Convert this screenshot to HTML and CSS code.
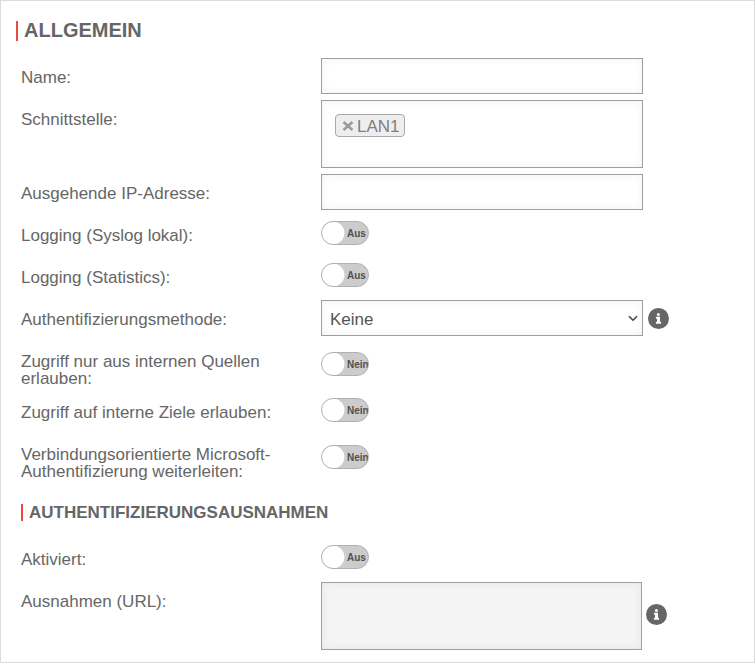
FILE: index.html
```html
<!DOCTYPE html>
<html lang="de">
<head>
<meta charset="utf-8">
<title>Allgemein</title>
<link rel="stylesheet" href="styles.css">
</head>
<body>
<svg class="symbols" width="0" height="0" aria-hidden="true">
  <symbol id="info" viewBox="0 0 21 21">
    <circle cx="10.5" cy="10.5" r="10.5" fill="#666"/>
    <circle cx="10.4" cy="6.4" r="1.5" fill="#fff"/>
    <path d="M7.9 8.8h4.1v4.9h1.1v2H7.9v-2H9v-2.9H7.9z" fill="#fff"/>
  </symbol>
</svg>
<main class="panel">
  <h1 class="title">ALLGEMEIN</h1>
  <form class="form">
    <div class="row"><label class="label">Name:</label><input class="field" type="text"></div>
    <div class="row"><label class="label">Schnittstelle:</label>
      <div class="field tags"><span class="tag"><svg class="remove" viewBox="0 0 12 12"><path d="M1.5 2l9 8M10.5 2l-9 8"/></svg>LAN1</span></div></div>
    <div class="row"><label class="label">Ausgehende IP-Adresse:</label><input class="field" type="text"></div>
    <div class="row"><label class="label">Logging (Syslog lokal):</label><span class="toggle">Aus</span></div>
    <div class="row"><label class="label">Logging (Statistics):</label><span class="toggle">Aus</span></div>
    <div class="row"><label class="label">Authentifizierungsmethode:</label>
      <div class="select-box field"><span>Keine</span><svg class="chevron" viewBox="0 0 10 7"><path d="M1 1.2l4 4 4-4"/></svg></div>
      <svg class="info"><use href="#info"/></svg></div>
    <div class="row double"><label class="label">Zugriff nur aus internen Quellen<br>erlauben:</label><span class="toggle">Nein</span></div>
    <div class="row"><label class="label">Zugriff auf interne Ziele erlauben:</label><span class="toggle">Nein</span></div>
    <div class="row double"><label class="label">Verbindungsorientierte Microsoft-<br>Authentifizierung weiterleiten:</label><span class="toggle">Nein</span></div>
    <h2 class="subtitle">AUTHENTIFIZIERUNGSAUSNAHMEN</h2>
    <div class="row"><label class="label">Aktiviert:</label><span class="toggle">Aus</span></div>
    <div class="row urls"><label class="label">Ausnahmen (URL):</label><div class="field disabled"></div>
      <svg class="info"><use href="#info"/></svg></div>
  </form>
</main>
</body>
</html>
```
FILE: styles.css
```css
* { box-sizing: border-box; }
body {
  margin: 0;
  background: #fff;
  color: #666;
  font: 17px/17px "Liberation Sans", Arial, sans-serif;
}
.symbols { display: none; }
.panel {
  height: 663px;
  border: 1px solid #dcdcdc;
  padding: 20px 15px 0;
  overflow: hidden;
}
.title {
  height: 20px;
  margin: 0 0 17px;
  padding-left: 6px;
  border-left: 2px solid #e74c3c;
  font-size: 20px;
  line-height: 18px;
  font-weight: bold;
}
.form {
  display: flex;
  flex-direction: column;
  gap: 6px;
  padding-left: 5px;
}
.row {
  display: flex;
  align-items: flex-start;
  min-height: 36px;
}
.double { height: 45px; }
.label {
  width: 300px;
  flex: none;
  padding-top: 11px;
}
.field {
  width: 322px;
  height: 36px;
  flex: none;
  margin: 0;
  border: 1px solid #a0a0a0;
  border-radius: 0;
  background: #fff;
  box-shadow: inset 0 0 8px rgba(0, 0, 0, 0.06);
  outline: none;
}
.tags {
  height: 68px;
  padding: 13px;
}
.tag {
  display: flex;
  align-items: center;
  width: 70px;
  height: 23px;
  padding: 1px 0 0 6px;
  border: 1px solid #a9a9a9;
  border-radius: 4px;
  background: #eee;
  color: #808080;
}
.remove {
  width: 12px;
  height: 12px;
  margin-right: 3px;
  flex: none;
  fill: none;
  stroke: #999;
  stroke-width: 2.5;
}
.toggle {
  width: 48px;
  height: 24px;
  flex: none;
  margin-top: 5px;
  padding-left: 25px;
  border: 1px solid #b0b0b0;
  border-radius: 12px;
  background: radial-gradient(circle at 11px 11px, #fff 11px, #ccc 11.8px);
  color: #505050;
  font: bold 10px/23px "Liberation Sans", Arial, sans-serif;
  white-space: nowrap;
  overflow: hidden;
}
.double .toggle { margin-top: 10px; }
.select-box {
  display: flex;
  align-items: center;
  justify-content: space-between;
  padding: 2px 4px 0 8px;
  color: #555;
}
.chevron {
  width: 10px;
  height: 7px;
  margin-bottom: 2px;
  fill: none;
  stroke: #444;
  stroke-width: 1.6;
}
.info {
  width: 21px;
  height: 21px;
  margin: 7.5px 0 0 5px;
}
.subtitle {
  height: 17px;
  margin: 18px 0 13px;
  padding-left: 6px;
  border-left: 2px solid #e74c3c;
  font-size: 17px;
  line-height: 17px;
  font-weight: bold;
}
.disabled {
  width: 321px;
  height: 68px;
  background: #f4f4f4;
}
.urls .info { margin: 21.5px 0 0 4px; }
```
